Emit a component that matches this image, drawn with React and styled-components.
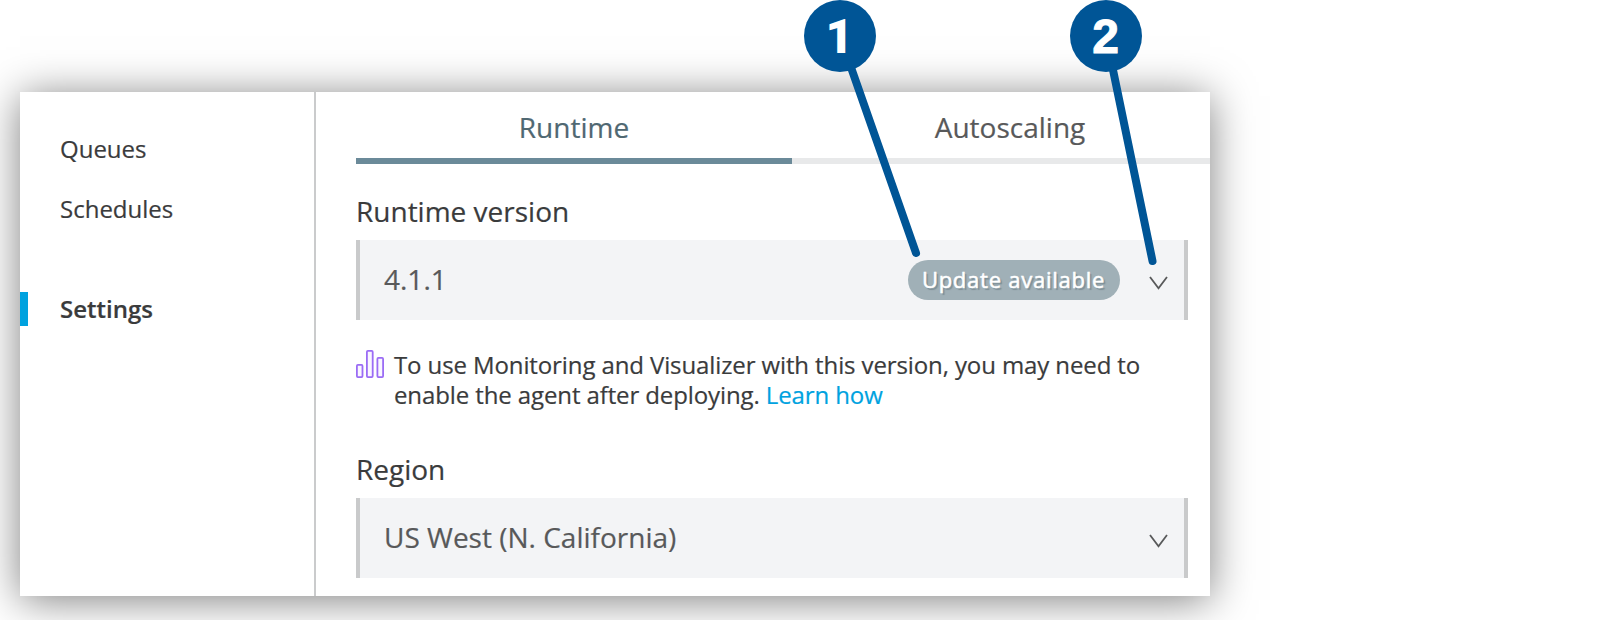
import React from 'react';
import styled, { createGlobalStyle } from 'styled-components';

const GlobalStyle = createGlobalStyle`
  *, *::before, *::after { box-sizing: border-box; }
  body {
    margin: 0;
    background: #fff;
    color: #3a3b3c;
    font-family: 'Open Sans', 'Noto Sans', sans-serif;
    -webkit-text-stroke: 0.2px currentColor;
    overflow: hidden;
  }
`;

const Page = styled.main`
  position: relative;
  width: 1618px;
  height: 620px;
  padding: 92px 0 0 20px;
  overflow: hidden;
`;

const Panel = styled.section`
  display: flex;
  width: 1190px;
  height: 504px;
  background: #fff;
  box-shadow: 0 4px 40px rgba(0, 0, 0, 0.5);
`;

const Sidebar = styled.nav`
  display: flex;
  flex-direction: column;
  width: 296px;
  padding-top: 40px;
  border-right: 2px solid #cacbcc;
`;

const NavItem = styled.a`
  height: 34px;
  margin-bottom: 26px;
  margin-top: ${({ $separated }) => ($separated ? '40px' : '0')};
  padding-left: ${({ $active }) => ($active ? '32px' : '40px')};
  border-left: ${({ $active }) => ($active ? '8px solid #00a2df' : '0')};
  font-size: 24px;
  font-weight: ${({ $active }) => ($active ? 600 : 400)};
  line-height: 34px;
`;

const Content = styled.div`
  flex: 1;
  min-width: 0;
  padding-left: 40px;
  overflow: hidden;
`;

const Tabs = styled.div`
  display: flex;
  height: 72px;
`;

const Tab = styled.div`
  flex: 0 0 436px;
  border-bottom: 6px solid ${({ $active }) => ($active ? '#6b8a99' : '#e8e9ea')};
  color: ${({ $active }) => ($active ? '#506872' : '#58595a')};
  font-size: 28px;
  line-height: 70px;
  text-align: center;
`;

const Form = styled.div`
  width: 832px;
`;

const Field = styled.div`
  padding-top: ${({ $gap }) => $gap}px;
`;

const Label = styled.div`
  height: 40px;
  margin-bottom: 8px;
  font-size: 28px;
  line-height: 38px;
`;

const Select = styled.div`
  display: flex;
  align-items: center;
  height: 80px;
  padding: 0 16px 0 24px;
  border: solid #c9cacb;
  border-width: 0 4px;
  background: #f3f4f6;
`;

const Value = styled.span`
  flex: 1;
  padding-bottom: 2px;
  color: #58595a;
  font-size: 28px;
  line-height: 38px;
`;

const Badge = styled.span`
  width: 212px;
  height: 40px;
  margin-right: 29px;
  border-radius: 20px;
  background: #a0b0b7;
  color: #fff;
  font-size: 22px;
  font-weight: 500;
  letter-spacing: 0.75px;
  line-height: 39px;
  text-align: center;
  text-indent: -1px;
  -webkit-text-stroke: 0.5px currentColor;
  text-shadow: 2px 2px 1px rgba(60, 80, 90, 0.35);
`;

const Chevron = styled.svg`
  width: 19px;
  height: 16px;
  margin-top: 6px;
`;

const Note = styled.div`
  display: flex;
  gap: 10px;
  padding-top: 30px;
`;

const NoteIcon = styled.svg`
  flex: none;
  width: 28px;
  height: 28px;
`;

const NoteText = styled.p`
  margin: 0;
  font-size: 24px;
  letter-spacing: -0.11px;
  line-height: 30px;
  white-space: nowrap;
`;

const Link = styled.a`
  color: #00a2df;
`;

const Callouts = styled.svg`
  position: absolute;
  inset: 0;
  width: 1618px;
  height: 620px;
  pointer-events: none;
`;

const CalloutNumber = styled.text`
  fill: #fff;
  stroke: #fff;
  stroke-width: ${({ $stroke }) => $stroke};
  font-family: ${({ $face }) => $face}, sans-serif;
  font-size: 48px;
  font-weight: 900;
  text-anchor: middle;
`;

const Arrow = () => (
  <Chevron viewBox="0 0 19 16" fill="none" stroke="#58595a" strokeWidth="1.8">
    <path d="M1 2 L9.5 13.3 L18 2" />
  </Chevron>
);

const Callout = ({ number, x, endX, endY, face, stroke = 0 }) => (
  <g>
    <path d={`M${x} 36 L${endX} ${endY}`} stroke="#005596" strokeWidth="8" strokeLinecap="round" />
    <circle cx={x} cy="36" r="36" fill="#005596" />
    <CalloutNumber x={x - 0.5} y="52.5" $face={face} $stroke={stroke}>{number}</CalloutNumber>
  </g>
);

export default function App() {
  return (
    <>
      <GlobalStyle />
      <Page>
        <Panel>
          <Sidebar>
            <NavItem>Queues</NavItem>
            <NavItem>Schedules</NavItem>
            <NavItem $active $separated>Settings</NavItem>
          </Sidebar>
          <Content>
            <Tabs>
              <Tab $active>Runtime</Tab>
              <Tab>Autoscaling</Tab>
            </Tabs>
            <Form>
              <Field $gap={28}>
                <Label>Runtime version</Label>
                <Select>
                  <Value>4.1.1</Value>
                  <Badge>Update available</Badge>
                  <Arrow />
                </Select>
              </Field>
              <Note>
                <NoteIcon viewBox="0 0 28 28" fill="#faf7ff" stroke="#9b6cf5" strokeWidth="1.8">
                  <rect x="0.9" y="14.9" width="5.6" height="12.2" rx="1" />
                  <rect x="10.9" y="0.9" width="5.8" height="26.2" rx="1" />
                  <rect x="21.4" y="7.9" width="5.7" height="19.2" rx="1" />
                </NoteIcon>
                <NoteText>
                  To use Monitoring and Visualizer with this version, you may need to
                  <br />
                  enable the agent after deploying. <Link>Learn how</Link>
                </NoteText>
              </Note>
              <Field $gap={40}>
                <Label>Region</Label>
                <Select>
                  <Value>US West (N. California)</Value>
                  <Arrow />
                </Select>
              </Field>
            </Form>
          </Content>
        </Panel>
        <Callouts aria-hidden="true">
          <Callout number="1" x={840} endX={916} endY={253} face="Roboto" />
          <Callout number="2" x={1106} endX={1152.5} endY={261} face="'Liberation Sans'" stroke={1} />
        </Callouts>
      </Page>
    </>
  );
}
